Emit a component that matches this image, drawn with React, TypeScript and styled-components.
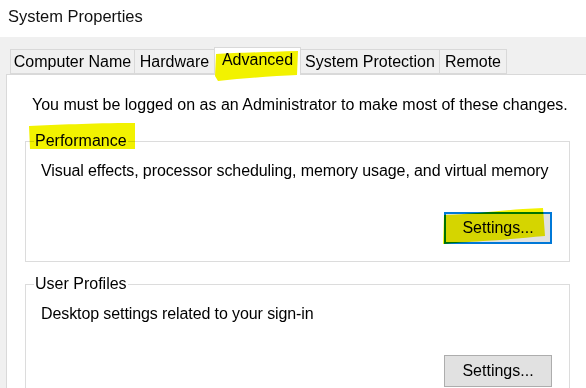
import React from 'react'
import styled, { createGlobalStyle } from 'styled-components'

const GlobalStyle = createGlobalStyle`
  html, body {
    margin: 0;
    padding: 0;
    background: #f0f0f0;
    font-family: 'Liberation Sans', Arial, sans-serif;
    color: #000;
  }
`

const Window = styled.div`
  width: 586px;
  height: 388px;
  overflow: hidden;
  background: #f0f0f0;
`

const TitleBar = styled.div`
  height: 37px;
  background: #fff;
  display: flex;
  align-items: center;
  padding-left: 8px;
  padding-bottom: 4px;
  box-sizing: border-box;
  font-size: 16.5px;
  color: #111;
`

const Body = styled.div`
  padding: 10px 0 0 6px;
`

const TabRow = styled.div`
  display: flex;
  align-items: flex-end;
  height: 27px;
  padding-left: 4px;
  position: relative;
  z-index: 1;
`

const Tab = styled.div<{ $active?: boolean; $width: number }>`
  position: relative;
  box-sizing: border-box;
  width: ${(p) => p.$width}px;
  height: ${(p) => (p.$active ? '28px' : '25px')};
  margin-bottom: ${(p) => (p.$active ? '-1px' : '0')};
  padding-bottom: ${(p) => (p.$active ? '4px' : '0')};
  margin-left: -1px;
  display: flex;
  align-items: center;
  justify-content: center;
  border: 1px solid #d9d9d9;
  border-bottom: ${(p) => (p.$active ? 'none' : '1px solid #d9d9d9')};
  background: ${(p) => (p.$active ? '#fff' : '#f0f0f0')};
  font-size: 16px;
  white-space: nowrap;
  &:first-child {
    margin-left: 0;
  }
`

const Panel = styled.div`
  width: 620px;
  height: 330px;
  background: #fff;
  border: 1px solid #d9d9d9;
  box-sizing: border-box;
  padding: 21px 0 0 18px;
`

const Notice = styled.p`
  margin: 0 0 18px 7px;
  font-size: 16px;
  line-height: 18px;
  white-space: nowrap;
`

const Group = styled.fieldset`
  width: 545px;
  box-sizing: border-box;
  margin: 0 0 13px 0;
  border: 1px solid #dcdcdc;
  padding: 12px 16px 17px 15px;
  min-inline-size: auto;
  display: flex;
  flex-direction: column;
`

const Legend = styled.legend`
  position: relative;
  margin-left: -7px;
  padding: 0 1px;
  font-size: 16px;
  line-height: 18px;
`

const GroupText = styled.div`
  font-size: 16px;
  line-height: 18px;
  margin-bottom: 32px;
  white-space: nowrap;
  letter-spacing: -0.1px;
`

const Button = styled.button<{ $default?: boolean }>`
  position: relative;
  align-self: flex-end;
  width: 108px;
  height: 32px;
  margin-right: 1px;
  box-sizing: border-box;
  background: #e1e1e1;
  border: ${(p) => (p.$default ? '2px solid #0078d7' : '1px solid #adadad')};
  font-family: 'Liberation Sans', Arial, sans-serif;
  font-size: 16px;
  color: #000;
  padding: 0;
`

const Label = styled.span`
  position: relative;
  z-index: 1;
`

const Marker = styled.svg<{ $left: number; $top: number }>`
  position: absolute;
  left: ${(p) => p.$left}px;
  top: ${(p) => p.$top}px;
  mix-blend-mode: multiply;
  pointer-events: none;
  z-index: 2;
`

const Highlight = ({ left, top, w, h, d }: { left: number; top: number; w: number; h: number; d: string }) => (
  <Marker $left={left} $top={top} width={w} height={h} viewBox={`0 0 ${w} ${h}`}>
    <path d={d} fill="#f2f200" />
  </Marker>
)

export default function App() {
  return (
    <Window>
      <GlobalStyle />
      <TitleBar>System Properties</TitleBar>
      <Body>
        <TabRow>
          <Tab $width={125}>Computer Name</Tab>
          <Tab $width={81}>Hardware</Tab>
          <Tab $width={87} $active>
            <Label>Advanced</Label>
            <Highlight left={0} top={2} w={84} h={32}
              d="M1 4 C20 3 50 2 83 1 L82 25 C60 26 30 28 3 31 L0 26 Z" />
          </Tab>
          <Tab $width={140}>System Protection</Tab>
          <Tab $width={68}>Remote</Tab>
        </TabRow>
        <Panel>
          <Notice>You must be logged on as an Administrator to make most of these changes.</Notice>
          <Group>
            <Legend>
              <Label>Performance</Label>
              <Highlight left={-6} top={-10} w={108} h={28}
                d="M1 4 C30 3 60 1 107 1 L107 27 C70 27 35 27 2 27 Z" />
            </Legend>
            <GroupText>Visual effects, processor scheduling, memory usage, and virtual memory</GroupText>
            <Button $default>
              <Label>Settings...</Label>
              <Highlight left={-3} top={-6} w={104} h={37}
                d="M1 7 C30 6 50 3 80 1 L100 0 L102 28 C80 30 60 32 40 33 C25 34 10 35 0 36 Z" />
            </Button>
          </Group>
          <Group>
            <Legend>User Profiles</Legend>
            <GroupText>Desktop settings related to your sign-in</GroupText>
            <Button>Settings...</Button>
          </Group>
        </Panel>
      </Body>
    </Window>
  )
}
